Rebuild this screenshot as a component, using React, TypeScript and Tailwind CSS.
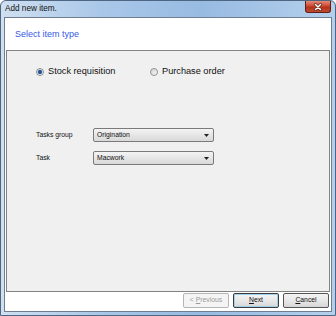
import React, { useState } from "react";

const font = { fontFamily: '"Liberation Sans", Arial, sans-serif' };

const Radio: React.FC<{ checked: boolean; label: string; onClick: () => void }> = ({ checked, label, onClick }) => (
  <div className="flex items-center gap-[4px] cursor-default" onClick={onClick}>
    <span className="flex items-center justify-center w-[8px] h-[8px] rounded-full border border-[#8f9194] bg-[linear-gradient(135deg,#d4d4d4,#f6f6f6)]">
      {checked && <span className="w-[4px] h-[4px] rounded-full bg-[#1f4f8f] shadow-[0_0_1px_#4fa3d8]" />}
    </span>
    <span className="text-[9.2px] leading-none text-[#111]">{label}</span>
  </div>
);

const Combo: React.FC<{ value: string }> = ({ value }) => (
  <div className="w-[121px] h-[14px] flex items-center justify-between rounded-[2px] border border-[#7a7a7a] bg-[linear-gradient(#f4f4f4,#e6e6e6_50%,#d9d9d9)] pl-[3px] pr-[4px]">
    <span className="text-[6.8px] leading-none text-[#111]">{value}</span>
    <svg width="5" height="3" viewBox="0 0 5 3">
      <path d="M0 0 H5 L2.5 3 Z" fill="#222" />
    </svg>
  </div>
);

const Btn: React.FC<{ children: React.ReactNode; disabled?: boolean; strong?: boolean }> = ({ children, disabled, strong }) => (
  <button
    className={
      disabled
        ? "w-[46px] h-[15px] rounded-[2px] border border-[#b5b5b5] bg-[#f4f4f4] text-[6.8px] leading-none text-[#9a9a9a]"
        : strong
        ? "w-[46px] h-[15px] rounded-[2px] border border-[#3c3c3c] bg-[linear-gradient(#f4f4f4,#e8e8e8_50%,#d6d6d6)] text-[6.8px] leading-none text-[#111] shadow-[inset_0_0_0_1px_#9fd0ec]"
        : "w-[46px] h-[15px] rounded-[2px] border border-[#555] bg-[linear-gradient(#f4f4f4,#e8e8e8_50%,#d6d6d6)] text-[6.8px] leading-none text-[#111]"
    }
  >
    {children}
  </button>
);

export default function App() {
  const [kind, setKind] = useState<"stock" | "purchase">("stock");

  return (
    <div style={font} className="relative w-[336px] h-[316px] flex flex-col rounded-t-[6px] border border-[#4f6682] bg-[linear-gradient(to_right,#cfe0f1,#a9c7e8_30%,#98bbe2_60%,#b4d0ec)]">
      <div className="h-[16px] flex items-center pl-[4px]">
        <span className="text-[8.2px] leading-none text-[#111]">Add new item.</span>
      </div>
      <div className="absolute z-10 top-0 right-[4px] w-[26px] h-[12px] rounded-b-[3px] border border-t-0 border-[#5e2016] bg-[linear-gradient(#e48a78,#cc4a33_45%,#b0321a_55%,#c24a30)] flex items-center justify-center">
        <svg width="10" height="8" viewBox="0 0 10 8">
          <path d="M2.5 1.5 L7.5 6.5 M7.5 1.5 L2.5 6.5" stroke="#5a2016" strokeWidth="2.8" strokeLinecap="round" />
          <path d="M2.5 1.5 L7.5 6.5 M7.5 1.5 L2.5 6.5" stroke="#ffffff" strokeWidth="1.5" strokeLinecap="round" />
        </svg>
      </div>

      <div className="flex-1 mx-[3px] mb-[3px] flex flex-col border border-[#6f7d8e] bg-white">
        <div className="h-[32px] flex items-center pl-[10px]">
          <span className="text-[9px] leading-none text-[#3858e6]">Select item type</span>
        </div>

        <div className="flex-1 mx-[1px] border border-[#828282] bg-[#f0f0f0] pl-[29px] pt-[16px]">
          <div className="flex items-center h-[10px]">
            <div className="w-[114px]">
              <Radio checked={kind === "stock"} label="Stock requisition" onClick={() => setKind("stock")} />
            </div>
            <Radio checked={kind === "purchase"} label="Purchase order" onClick={() => setKind("purchase")} />
          </div>

          <div className="mt-[51px] flex flex-col gap-[9px]">
            <div className="flex items-center">
              <span className="w-[57px] text-[6.8px] leading-none text-[#111]">Tasks group</span>
              <Combo value="Origination" />
            </div>
            <div className="flex items-center">
              <span className="w-[57px] text-[6.8px] leading-none text-[#111]">Task</span>
              <Combo value="Macwork" />
            </div>
          </div>
        </div>

        <div className="h-[19px] flex items-start justify-end gap-[4px] pt-[1px] pr-[2px]">
          <Btn disabled>
            &lt; <span className="underline">P</span>revious
          </Btn>
          <Btn strong>
            <span className="underline">N</span>ext
          </Btn>
          <Btn>
            <span className="underline">C</span>ancel
          </Btn>
        </div>
      </div>
    </div>
  );
}
